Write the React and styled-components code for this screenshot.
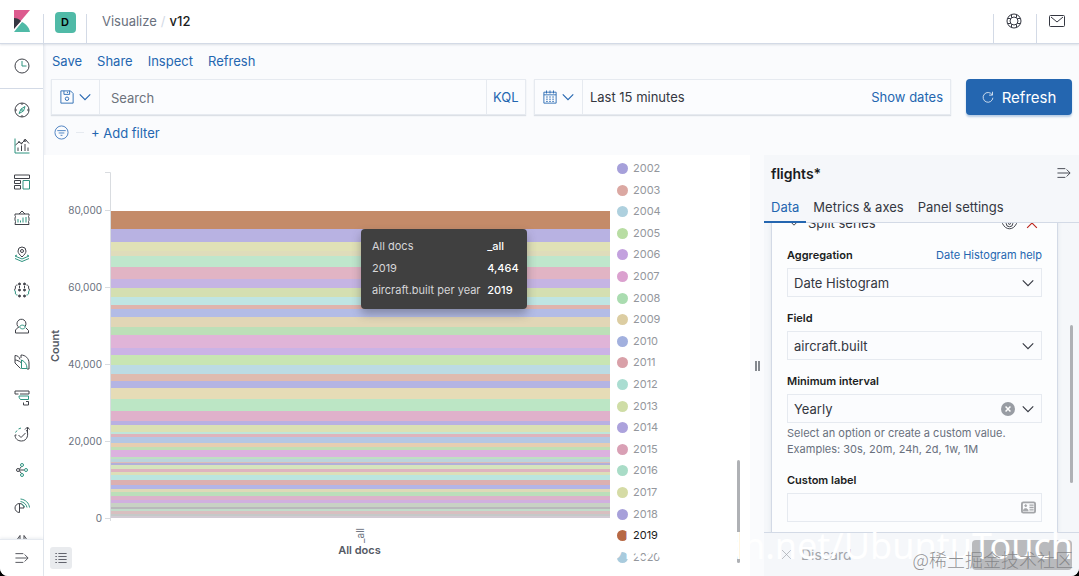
import React from 'react';
import styled, { createGlobalStyle, css, ThemeProvider } from 'styled-components';

const theme = {
    blue: '#2466b0',
    ink: '#1a1c21',
    text: '#343741',
    subdued: '#69707d',
    line: '#d3dae6',
    softLine: '#e6eaf0',
    teal: '#2f9480',
    font: {
        family: 'Inter, "Liberation Sans", sans-serif',
        size: { xs: '11px', s: '12px', m: '13px', l: '15px' },
    },
};

const GlobalStyle = createGlobalStyle`
    * {
        box-sizing: border-box;
    }
    html {
        background: #000000;
    }
    body {
        margin: 0;
        font-family: ${theme.font.family};
        font-size: ${theme.font.size.m};
        color: ${theme.text};
    }
    button, input, select {
        font: inherit;
        color: inherit;
    }
    a {
        text-decoration: none;
    }
`;

const Page = styled.div`
    position: relative;
    display: flex;
    flex-direction: column;
    height: 100vh;
    overflow: hidden;
    border-radius: 0 0 8px 8px;
    background-color: #fafbfd;
`;

const IconSvg = styled.svg`
    display: block;
    flex-shrink: 0;
    fill: none;
    stroke: currentColor;
    stroke-width: 2;
    .accent {
        stroke: ${({ theme: { teal } }) => teal};
    }
`;

const PlainButton = styled.button`
    display: flex;
    align-items: center;
    justify-content: center;
    padding: 0;
    border: 0;
    background: none;
    cursor: pointer;
`;

const Header = styled.header`
    position: relative;
    z-index: 1;
    display: flex;
    align-items: flex-end;
    flex-shrink: 0;
    height: 44px;
    background-color: #ffffff;
    border-bottom: 1px solid ${({ theme: { line } }) => line};
    box-shadow: 0 1px 2px rgba(152, 162, 179, 0.3);
`;
const HeaderCell = styled.div`
    display: flex;
    align-items: flex-start;
    justify-content: center;
    width: ${({ $wide }) => ($wide ? 44 : 43)}px;
    height: 29px;
    ${({ $side, theme: { line } }) =>
        $side === 'left'
            ? css`
                  padding-right: 2px;
                  border-left: 1px solid ${line};
              `
            : css`
                  border-right: 1px solid ${line};
              `}
`;
const HeaderItem = styled(PlainButton)`
    height: 22px;
    margin-top: ${({ $lift }) => ($lift ? '-4px' : '-3px')};
`;
const Space = styled.span`
    width: 21px;
    height: 21px;
    border-radius: 4px;
    background-color: #50baa7;
    color: #000000;
    font-size: ${({ theme }) => theme.font.size.xs};
    font-weight: 600;
    line-height: 21px;
    text-align: center;
`;
const Breadcrumbs = styled.nav`
    display: flex;
    flex: 1;
    gap: 4px;
    height: 29px;
    padding-left: 15px;
    line-height: 14px;
    a {
        color: ${({ theme: { subdued } }) => subdued};
    }
    i {
        color: ${({ theme: { line } }) => line};
        font-style: normal;
    }
    strong {
        font-weight: 500;
        color: ${({ theme: { ink } }) => ink};
    }
`;

const Body = styled.div`
    display: flex;
    flex: 1;
    min-height: 0;
`;
const Sidebar = styled.nav`
    display: flex;
    flex-direction: column;
    flex-shrink: 0;
    width: 44px;
    background-color: #ffffff;
    border-right: 1px solid ${({ theme: { softLine } }) => softLine};
    box-shadow: 1px 0 2px rgba(152, 162, 179, 0.15);
`;
const SideLink = styled.a`
    display: flex;
    align-items: center;
    justify-content: center;
    flex-shrink: 0;
    width: 100%;
    height: ${({ $height }) => $height || 36}px;
    color: #404249;
`;
const SideTop = styled.div`
    border-bottom: 1px solid ${({ theme: { line } }) => line};
`;
const SideList = styled.div`
    flex: 1;
    min-height: 0;
    padding-top: 3px;
    overflow: hidden;
`;
const SideBottom = styled.div`
    border-top: 1px solid ${({ theme: { softLine } }) => softLine};
    box-shadow: 0 -1px 3px rgba(152, 162, 179, 0.2);
`;

const Main = styled.main`
    display: flex;
    flex-direction: column;
    flex: 1;
    min-width: 0;
`;
const TopMenu = styled.div`
    display: flex;
    gap: 15px;
    padding: 8px 8px 9px;
    line-height: 18px;
`;
const BlueLink = styled.a`
    color: ${({ theme: { blue } }) => blue};
    font-size: ${({ $small, theme }) => ($small ? theme.font.size.xs : theme.font.size.m)};
    white-space: nowrap;
`;
const QueryRow = styled.div`
    display: flex;
    gap: 8px;
    padding: 0 7px;
`;
const FieldGroup = styled.div`
    display: flex;
    flex: ${({ $grow }) => $grow} 1 0;
    height: 36px;
    border: 1px solid ${({ theme: { softLine } }) => softLine};
    background-color: #fbfcfe;
    box-shadow: 0 1px 1px rgba(152, 162, 179, 0.3);
`;
const GroupButton = styled(PlainButton)`
    gap: 5px;
    width: 48px;
    color: ${({ theme: { blue } }) => blue};
    ${({ $end, theme: { softLine } }) =>
        $end
            ? css`
                  width: 39px;
                  border-left: 1px solid ${softLine};
              `
            : css`
                  border-right: 1px solid ${softLine};
              `}
`;
const SearchInput = styled.input`
    flex: 1;
    min-width: 0;
    padding: 1px 11px 0;
    border: 0;
    background: none;
    &::placeholder {
        color: #6d727c;
        opacity: 1;
    }
`;
const DateText = styled(PlainButton)`
    flex: 1;
    justify-content: flex-start;
    padding-left: 7px;
`;
const ShowDates = styled(PlainButton)`
    padding-right: 7px;
    color: ${({ theme: { blue } }) => blue};
`;
const RefreshButton = styled(PlainButton)`
    gap: 8px;
    width: 106px;
    height: 36px;
    margin-left: 7px;
    border-radius: 4px;
    background-color: #2466b0;
    box-shadow: 0 2px 2px rgba(36, 102, 176, 0.3);
    color: #ffffff;
    font-size: ${({ theme }) => theme.font.size.l};
`;
const FilterRow = styled.div`
    display: flex;
    align-items: center;
    gap: 7px;
    height: 40px;
    padding: 0 10px 5px;
    color: #4a7fc0;
`;
const Dash = styled.span`
    width: 8px;
    height: 1px;
    background-color: ${({ theme: { softLine } }) => softLine};
`;

const Editor = styled.div`
    display: flex;
    flex: 1;
    min-height: 0;
`;
const Visualization = styled.section`
    position: relative;
    display: flex;
    flex: 1;
    min-width: 0;
    background-color: #ffffff;
`;
const Chart = styled.div`
    flex: 1;
    min-width: 0;
    padding: 10px 0 0 5px;
    color: ${({ theme: { subdued } }) => subdued};
    font-size: ${({ theme }) => theme.font.size.xs};
`;
const PlotRow = styled.div`
    display: flex;
    height: 358px;
`;
const YTitle = styled.div`
    width: 12px;
    padding-bottom: 4px;
    line-height: 12px;
    writing-mode: vertical-rl;
    transform: rotate(180deg);
    text-align: center;
    font-weight: 600;
    color: #555a64;
`;
const AxisSvg = styled.svg`
    width: 49px;
    height: 100%;
    margin-left: 1px;
    fill: #69707d;
    font-size: 10px;
    path {
        fill: none;
        stroke: #d9dce0;
    }
`;
const BarSvg = styled.svg`
    flex: 1;
    min-width: 0;
    height: 354px;
`;
const XAxis = styled.div`
    display: flex;
    flex-direction: column;
    align-items: center;
    padding-left: 60px;
`;
const XTick = styled.span`
    height: 20px;
    font-size: 10px;
    line-height: 12px;
    writing-mode: vertical-rl;
    transform: rotate(180deg);
`;
const XTitle = styled.strong`
    line-height: 14px;
    font-weight: 600;
    color: #555a64;
`;
const Legend = styled.ul`
    display: flex;
    flex-direction: column;
    width: 140px;
    margin: 0;
    padding: 2px 0 0 7px;
    overflow: hidden;
    list-style: none;
`;
const LegendItem = styled.li`
    display: flex;
    align-items: center;
    flex-shrink: 0;
    gap: 5px;
    height: 22px;
    margin-bottom: ${({ $tight }) => ($tight ? '-1px' : 0)};
    font-size: ${({ theme }) => theme.font.size.xs};
    color: ${({ $active }) => ($active ? '#1a1c21' : '#94979d')};
    &::before {
        content: '';
        width: 11px;
        height: 11px;
        border-radius: 50%;
        background-color: ${({ $color }) => $color};
    }
`;
const ScrollThumb = styled.span`
    position: absolute;
    top: ${({ $top }) => $top}px;
    right: ${({ $right }) => $right}px;
    width: 3px;
    height: ${({ $height }) => $height}px;
    border-radius: 2px;
    background-color: #afb1b5;
`;
const LegendToggle = styled(PlainButton)`
    position: absolute;
    bottom: 7px;
    left: 6px;
    width: 22px;
    height: 22px;
    border-radius: 3px;
    background-color: #e9ebee;
`;
const Tooltip = styled.table`
    position: absolute;
    top: 74px;
    left: 317px;
    width: 166px;
    height: 80px;
    padding: 6px 8px 8px 9px;
    border-radius: 4px;
    border-spacing: 0;
    background-color: #404040;
    box-shadow: 0 5px 10px rgba(60, 60, 70, 0.4);
    color: #d6d6d8;
    font-size: ${({ theme }) => theme.font.size.xs};
    white-space: nowrap;
    th,
    td {
        padding: 0 0 0 2px;
        text-align: left;
        font-weight: 400;
    }
    td {
        padding-left: 6px;
        color: #ffffff;
        font-weight: 500;
    }
`;
const Resizer = styled.div`
    display: flex;
    align-items: center;
    justify-content: center;
    gap: 1px;
    width: 14px;
    &::before,
    &::after {
        content: '';
        width: 2px;
        height: 10px;
        background-color: #85898f;
    }
`;

const Panel = styled.aside`
    position: relative;
    display: flex;
    flex-direction: column;
    width: 315px;
    background-color: #f5f7fa;
`;
const PanelHeader = styled.div`
    display: flex;
    align-items: center;
    justify-content: space-between;
    height: 36px;
    padding: 0 8px 0 7px;
    h2 {
        margin: 0;
        font-size: 14px;
        font-weight: 600;
        color: ${({ theme: { ink } }) => ink};
    }
`;
const Tabs = styled.div`
    display: flex;
    flex-shrink: 0;
    height: 32px;
    border-bottom: 1px solid ${({ theme: { line } }) => line};
`;
const Tab = styled(PlainButton)`
    height: 32px;
    padding: 0 7px;
    white-space: nowrap;
    ${({ $active, theme: { blue } }) =>
        $active &&
        css`
            color: ${blue};
            box-shadow: inset 0 -2px 0 ${blue};
        `}
`;
const PanelBody = styled.div`
    flex: 1;
    min-height: 0;
    padding: 0 21px 0 7px;
    overflow: hidden;
`;
const Card = styled.div`
    display: flex;
    flex-direction: column;
    gap: 13px;
    margin-top: -20px;
    padding: 8px 15px 20px 15px;
    border: 1px solid ${({ theme: { line } }) => line};
    border-radius: 4px;
    background-color: #fcfdfe;
    box-shadow: 0 1px 4px rgba(152, 162, 179, 0.2);
`;
const CardTitle = styled.div`
    display: flex;
    align-items: center;
    gap: 9px;
    height: 22px;
    padding: 0 4px 0 2px;
    span {
        flex: 1;
    }
`;
const FormRow = styled.div`
    display: flex;
    flex-direction: column;
    gap: 5px;
`;
const LabelRow = styled.div`
    display: flex;
    justify-content: space-between;
    line-height: 16px;
    label {
        font-size: ${({ theme }) => theme.font.size.xs};
        font-weight: 600;
        color: ${({ theme: { ink } }) => ink};
    }
`;
const Control = styled.div`
    display: flex;
    align-items: center;
    height: 29px;
    padding-right: ${({ $tight }) => ($tight ? '5px' : '7px')};
    border: 1px solid ${({ theme: { softLine } }) => softLine};
    background-color: #fbfcfe;
    gap: 7px;
    select,
    input {
        flex: 1;
        min-width: 0;
        height: 27px;
        padding: 0 0 0 6px;
        border: 0;
        appearance: none;
        background: none;
    }
`;
const Clear = styled(PlainButton)`
    width: 14px;
    height: 14px;
    border-radius: 50%;
    background-color: #989ca3;
    color: #ffffff;
`;
const Help = styled.p`
    margin: -3px 0 2px;
    font-size: ${({ theme }) => theme.font.size.xs};
    line-height: 16px;
    color: ${({ theme: { subdued } }) => subdued};
`;
const PanelFooter = styled.div`
    display: flex;
    align-items: center;
    justify-content: space-between;
    flex-shrink: 0;
    height: 44px;
    padding: 0 7px 0 17px;
    border-top: 1px solid ${({ theme: { line } }) => line};
`;
const Discard = styled(PlainButton)`
    gap: 9px;
    color: #a2a5ab;
    font-size: 14px;
`;
const Update = styled(PlainButton)`
    width: 100px;
    height: 30px;
    border-radius: 4px;
    background-color: #b9babd;
`;

const Watermark = styled.div`
    position: absolute;
    right: 6px;
    bottom: 5px;
    z-index: 3;
    color: rgba(125, 125, 128, 0.85);
    font: 300 18px/24px 'Noto Sans CJK SC', sans-serif;
    pointer-events: none;
    white-space: nowrap;
`;
const SiteMark = styled(Watermark)`
    bottom: 8px;
    z-index: 2;
    color: #ffffff;
    font: 36px/44px 'Noto Sans', sans-serif;
`;

const Icon = ({ size = 16, box = 32, children, ...rest }) => (
    <IconSvg width={size} height={size} viewBox={`0 0 ${box} ${box}`} aria-hidden="true" {...rest}>
        {children}
    </IconSvg>
);

const Chevron = () => (
    <Icon size={12}>
        <path d="M2 9l14 14L30 9" strokeWidth="3" />
    </Icon>
);

const MenuArrow = () => (
    <Icon size={14}>
        <path d="M1 6h18M1 16h28M1 26h18M22 8l8 8-8 8" />
    </Icon>
);

const apps = [
    {
        name: 'Discover',
        icon: (
            <>
                <circle cx="16" cy="16" r="14" />
                <path d="M16 2v4M16 26v4M2 16h4M26 16h4" />
                <path className="accent" d="M22 9l-3 9-9 5 4-9z" />
                <circle className="accent" cx="16" cy="16" r="1" />
            </>
        ),
    },
    {
        name: 'Visualize',
        icon: (
            <>
                <path className="accent" d="M2 1v29h29" />
                <path d="M3 14l7-6 5 3 8-8 7 8M8 19v7M15 15v11M22 12v14M28 19v7" />
                <circle cx="10" cy="8" r="1" />
                <circle cx="15" cy="11" r="1" />
                <circle cx="22" cy="5" r="2" />
            </>
        ),
    },
    {
        name: 'Dashboard',
        icon: (
            <>
                <path d="M1 2h30v7H1zM1 13h12v6H1zM1 23h12v7H1z" />
                <path className="accent" d="M18 13h13v17H18z" />
            </>
        ),
    },
    {
        name: 'Canvas',
        icon: (
            <>
                <path d="M2 8h28v3l-1 2 1 3v5l-1 2 1 6H2l1-6-1-3v-4l1-3-1-2zM10 8l6-6 6 6" />
                <path className="accent" d="M8 18v7M13 21v4M18 15v10M24 14v11" />
            </>
        ),
    },
    {
        name: 'Maps',
        icon: (
            <>
                <path d="M16 22c-5-5-8-8-8-12a8 8 0 0116 0c0 4-3 7-8 12z" />
                <circle cx="16" cy="10" r="3" />
                <path className="accent" d="M6 18l-4 2 14 6 14-6-4-2M2 25l14 6 14-6" />
            </>
        ),
    },
    {
        name: 'Machine Learning',
        icon: (
            <>
                <g fill="currentColor">
                    <circle cx="11" cy="4" r="2" />
                    <circle cx="21" cy="4" r="2" />
                    <circle cx="11" cy="16" r="2" />
                    <circle cx="21" cy="16" r="2" />
                    <circle cx="11" cy="28" r="2" />
                    <circle cx="21" cy="28" r="2" />
                </g>
                <path d="M7 6c-4 0-5 3-4 6l-2 4M25 6c4 0 5 3 4 6l2 4M11 8v4M21 8v4" />
                <path className="accent" d="M1 16l2 4c-1 3 0 6 4 6M31 16l-2 4c1 3 0 6-4 6" />
            </>
        ),
    },
    {
        name: 'Metrics',
        icon: (
            <>
                <path d="M10 19a9 9 0 1112-2M9 18l-6 6v6h26v-5l-5-5" />
                <path className="accent" d="M11 18c2-5 9-5 12 0-3 5-9 5-12 0z" />
            </>
        ),
    },
    {
        name: 'Logs',
        icon: (
            <>
                <path d="M2 12V3c5 0 9 3 10 8M14 8V2c9 0 16 7 16 16v12h-4" />
                <path className="accent" d="M15 12v17h11c0-8-4-14-11-17z" />
                <path d="M2 12c4 0 8 2 12 5M2 12v6l11 11" />
            </>
        ),
    },
    {
        name: 'APM',
        icon: (
            <>
                <path d="M9 8H2V2h28v6H12M19 25v5h10v-7h-5" />
                <path className="accent" d="M10 12h19v7H14c-3 0-4-4-4-7z" />
            </>
        ),
    },
    {
        name: 'Uptime',
        icon: (
            <>
                <path d="M25 8c5 8 2 22-10 22C7 30 2 25 2 18h3M27 15V3M22 7l5-5 4 5M9 18l5 5 9-9" />
                <path className="accent" d="M3 13l3-4M9 6l5-2" />
            </>
        ),
    },
    {
        name: 'SIEM',
        icon: (
            <>
                <circle cx="8" cy="16" r="3" />
                <path d="M11 16h9M11 14l4-5M11 18l4 5" />
                <circle className="accent" cx="16" cy="6" r="3" />
                <circle className="accent" cx="24" cy="16" r="3" />
                <circle className="accent" cx="16" cy="26" r="3" />
            </>
        ),
    },
    {
        name: 'Dev Tools',
        icon: (
            <>
                <path d="M11 20h9a9 9 0 10-9 9zM11 11v9" />
                <path className="accent" d="M13 2c10 1 17 8 18 17M13 7c7 1 12 6 13 12M15 12c3 1 5 3 6 6" />
            </>
        ),
    },
    {
        name: 'Stack Monitoring',
        icon: <path d="M12 3L3 16l9 13M20 3l9 13-9 13M12 3v20M20 3v20" />,
    },
];

// [height, colour] from the top of the stack to the bottom
const bands = [
    [18, '#c48b69'],
    [13, '#b8b2e2'],
    [9, '#e0e1b6'],
    [5, '#dfdcbb'],
    [11, '#bfe6cc'],
    [12, '#e1b4c4'],
    [9, '#c5b4e3'],
    [9, '#d4dfb1'],
    [8, '#bfe5e3'],
    [4, '#dfb4ad'],
    [8, '#b3bce6'],
    [10, '#e1d6b6'],
    [8, '#bcdfb8'],
    [13, '#e0b4d8'],
    [7, '#cbb3e6'],
    [10, '#c8e5b3'],
    [9, '#bcdbe4'],
    [7, '#dfbbb0'],
    [7, '#b4b4e3'],
    [11, '#e6dcb6'],
    [12, '#bce6c5'],
    [10, '#e0b1cb'],
    [4, '#b9b0e2'],
    [7, '#dbe0b4'],
    [2, '#bfe5da'],
    [3, '#deb3bc'],
    [6, '#b4c7e4'],
    [4, '#e7ceb1'],
    [3, '#c0dfb6'],
    [7, '#dcb1df'],
    [2, '#bfdfc2'],
    [3, '#bcd3dc'],
    [1, '#dcbdb8'],
    [2, '#b3afd9'],
    [4, '#d6e4bd'],
    [3, '#dfb3bf'],
    [3, '#dddfb8'],
    [5, '#bbe5df'],
    [5, '#dcb0b0'],
    [4, '#b3b5e7'],
    [3, '#dfdab7'],
    [4, '#bbdfba'],
    [4, '#dcb3cb'],
    [3, '#d0b0df'],
    [4, '#c8d2c4'],
    [2, '#b9b9bb'],
    [2, '#c2dcca'],
    [3, '#d8bfc0'],
    [2, '#c5c9c8'],
    [2, '#d2cbd4'],
];

const stack = bands.reduce((rects, [height, color]) => {
    const last = rects[rects.length - 1];
    return [...rects, { y: last ? last.y + last.height : 46, height, color }];
}, []);

const years = [
    ['2002', '#a6a0da'],
    ['2003', '#dba8a2'],
    ['2004', '#aed0de'],
    ['2005', '#b8dda3'],
    ['2006', '#c3a1de'],
    ['2007', '#dba1cf'],
    ['2008', '#aadcb0'],
    ['2009', '#dccda2'],
    ['2010', '#a2b0de'],
    ['2011', '#d9a0a8'],
    ['2012', '#aaddd1'],
    ['2013', '#cfdda6'],
    ['2014', '#aca2dc'],
    ['2015', '#d9a0b5'],
    ['2016', '#a9dcc7'],
    ['2017', '#d5dba5'],
    ['2018', '#a7a0da'],
    ['2019', '#b76844'],
    ['2020', '#a9cbdd'],
];

const ticks = ['80,000', '60,000', '40,000', '20,000', '0'];

const Field = ({ id, label, link, children }) => (
    <FormRow>
        <LabelRow>
            <label htmlFor={id}>{label}</label>
            {!!link && (
                <BlueLink href="#help" $small>
                    {link}
                </BlueLink>
            )}
        </LabelRow>
        {children}
    </FormRow>
);

const TopHeader = () => (
    <Header>
        <HeaderCell $side="right" $wide>
            <HeaderItem aria-label="Home" $lift>
                <svg width="16" height="22" viewBox="0 0 16 22">
                    <path fill="#dd5b8f" d="M0 0h16L0 19z" />
                    <path fill="#343741" d="M0 8c3 0 5 1 7 3L0 19z" />
                    <path fill="#50baa7" d="M8 12c4 2 7 5 8 10H0z" />
                    <path stroke="#ffffff" d="M0 20L8 11" />
                </svg>
            </HeaderItem>
        </HeaderCell>
        <HeaderCell $side="right">
            <HeaderItem aria-label="Default space">
                <Space>D</Space>
            </HeaderItem>
        </HeaderCell>
        <Breadcrumbs>
            <a href="#visualize">Visualize</a>
            <i>/</i>
            <strong>v12</strong>
        </Breadcrumbs>
        <HeaderCell $side="left">
            <HeaderItem aria-label="Help" $lift>
                <Icon>
                    <circle cx="16" cy="16" r="14" />
                    <circle cx="16" cy="16" r="8" />
                    <path d="M11 3v6M21 3v6M11 23v6M21 23v6M3 11h6M3 21h6M23 11h6M23 21h6" />
                </Icon>
            </HeaderItem>
        </HeaderCell>
        <HeaderCell $side="left">
            <HeaderItem aria-label="Newsfeed" $lift>
                <Icon>
                    <rect x="1" y="5" width="30" height="22" rx="2" />
                    <path d="M4 8l12 10L28 8" />
                </Icon>
            </HeaderItem>
        </HeaderCell>
    </Header>
);

const SideNav = () => (
    <Sidebar>
        <SideTop>
            <SideLink href="#recent" aria-label="Recently viewed" $height={44}>
                <Icon>
                    <circle cx="16" cy="16" r="14" />
                    <path className="accent" d="M16 6v10h9" />
                </Icon>
            </SideLink>
        </SideTop>
        <SideList>
            {apps.map(({ name, icon }) => (
                <SideLink key={name} href="#app" aria-label={name}>
                    <Icon>{icon}</Icon>
                </SideLink>
            ))}
        </SideList>
        <SideBottom>
            <SideLink as={PlainButton} aria-label="Expand">
                <MenuArrow />
            </SideLink>
        </SideBottom>
    </Sidebar>
);

const QueryBar = () => (
    <QueryRow>
        <FieldGroup $grow={475}>
            <GroupButton aria-label="Saved queries">
                <Icon size={14}>
                    <path d="M2 2h22l6 6v22H2zM9 2v8h13V2M17 4v3" />
                    <circle cx="16" cy="20" r="4" />
                </Icon>
                <Chevron />
            </GroupButton>
            <SearchInput aria-label="Search" placeholder="Search" />
            <GroupButton $end>KQL</GroupButton>
        </FieldGroup>
        <FieldGroup $grow={417}>
            <GroupButton aria-label="Quick select">
                <Icon size={14}>
                    <path d="M2 5h28v25H2zM2 11h28M8 1v7M16 1v7M24 1v7" />
                    <path strokeDasharray="4 3" d="M7 16h18M7 21h18M7 26h18" />
                </Icon>
                <Chevron />
            </GroupButton>
            <DateText>Last 15 minutes</DateText>
            <ShowDates>Show dates</ShowDates>
        </FieldGroup>
        <RefreshButton>
            <Icon size={12}>
                <path d="M28 2v9h-9M27 10A13 13 0 1029 18" />
            </Icon>
            Refresh
        </RefreshButton>
    </QueryRow>
);

const StackedChart = () => (
    <Chart>
        <PlotRow>
            <YTitle>Count</YTitle>
            <AxisSvg>
                <path d="M43 7.5h5.5V356M43 45.5h5M43 122.5h5M43 199.5h5M43 276.5h5M43 353.5h5" />
                {ticks.map((tick, i) => (
                    <text key={tick} x="40" y={49 + i * 77} textAnchor="end">
                        {tick}
                    </text>
                ))}
            </AxisSvg>
            <BarSvg viewBox="0 0 500 354" preserveAspectRatio="none" shapeRendering="crispEdges">
                {stack.map(({ y, height, color }) => (
                    <rect key={y} y={y} width="500" height={height} fill={color} />
                ))}
            </BarSvg>
        </PlotRow>
        <XAxis>
            <XTick>_all</XTick>
            <XTitle>All docs</XTitle>
        </XAxis>
    </Chart>
);

const SidePanel = () => (
    <Panel>
        <PanelHeader>
            <h2>flights*</h2>
            <PlainButton aria-label="Toggle sidebar">
                <MenuArrow />
            </PlainButton>
        </PanelHeader>
        <Tabs role="tablist">
            <Tab role="tab" $active>
                Data
            </Tab>
            <Tab role="tab">Metrics &amp; axes</Tab>
            <Tab role="tab">Panel settings</Tab>
        </Tabs>
        <PanelBody>
            <Card>
                <CardTitle>
                    <Icon size={10}>
                        <path d="M2 9l14 14L30 9" strokeWidth="3" />
                    </Icon>
                    <span>Split series</span>
                    <PlainButton aria-label="Disable aggregation">
                        <Icon size={15}>
                            <path d="M1 16C8 1 24 1 31 16 24 31 8 31 1 16z" />
                            <circle cx="16" cy="16" r="7" />
                            <circle cx="16" cy="16" r="2" />
                        </Icon>
                    </PlainButton>
                    <PlainButton aria-label="Remove">
                        <Icon size={12} color="#bd271e">
                            <path d="M3 3l26 26M29 3L3 29" strokeWidth="3" />
                        </Icon>
                    </PlainButton>
                </CardTitle>
                <Field id="aggregation" label="Aggregation" link="Date Histogram help">
                    <Control>
                        <select id="aggregation">
                            <option>Date Histogram</option>
                        </select>
                        <Chevron />
                    </Control>
                </Field>
                <Field id="field" label="Field">
                    <Control>
                        <select id="field">
                            <option>aircraft.built</option>
                        </select>
                        <Chevron />
                    </Control>
                </Field>
                <Field id="interval" label="Minimum interval">
                    <Control>
                        <input id="interval" defaultValue="Yearly" />
                        <Clear aria-label="Clear interval">
                            <Icon size={6}>
                                <path d="M3 3l26 26M29 3L3 29" strokeWidth="8" />
                            </Icon>
                        </Clear>
                        <Chevron />
                    </Control>
                    <Help>
                        Select an option or create a custom value.
                        <br />
                        Examples: 30s, 20m, 24h, 2d, 1w, 1M
                    </Help>
                </Field>
                <Field id="label" label="Custom label">
                    <Control $tight>
                        <input id="label" />
                        <Icon size={15} color="#a3a5a9">
                            <rect x="2" y="5" width="28" height="22" rx="3" strokeWidth="4" />
                            <path d="M18 11h9M18 16h9M18 21h9" strokeWidth="3" />
                            <path d="M5 23c0-6 10-6 10 0z" fill="currentColor" />
                            <circle cx="10" cy="12" r="2" fill="currentColor" />
                        </Icon>
                    </Control>
                </Field>
            </Card>
        </PanelBody>
        <PanelFooter>
            <Discard>
                <Icon size={11}>
                    <path d="M3 3l26 26M29 3L3 29" />
                </Icon>
                Discard
            </Discard>
            <Update aria-label="Update" disabled />
        </PanelFooter>
        <ScrollThumb $top={170} $right={6} $height={158} />
    </Panel>
);

const App = () => (
    <ThemeProvider theme={theme}>
        <GlobalStyle />
        <Page>
            <TopHeader />
            <Body>
                <SideNav />
                <Main>
                    <TopMenu>
                        <BlueLink href="#save">Save</BlueLink>
                        <BlueLink href="#share">Share</BlueLink>
                        <BlueLink href="#inspect">Inspect</BlueLink>
                        <BlueLink href="#refresh">Refresh</BlueLink>
                    </TopMenu>
                    <QueryBar />
                    <FilterRow>
                        <Icon size={15}>
                            <circle cx="16" cy="16" r="14" />
                            <path d="M7 12h18M10 17h12M14 22h4" />
                        </Icon>
                        <Dash />
                        <BlueLink href="#filter">+ Add filter</BlueLink>
                    </FilterRow>
                    <Editor>
                        <Visualization>
                            <StackedChart />
                            <Legend>
                                {years.map(([year, color], i) => (
                                    <LegendItem
                                        key={year}
                                        $color={color}
                                        $active={year === '2019'}
                                        $tight={i % 5 === 1 || i % 5 === 3}
                                    >
                                        {year}
                                    </LegendItem>
                                ))}
                            </Legend>
                            <ScrollThumb $top={305} $right={10} $height={103} />
                            <LegendToggle aria-label="Toggle legend">
                                <Icon size={12}>
                                    <path d="M1 4h4M9 4h22M1 12h4M9 12h22M1 20h4M9 20h22M1 28h4M9 28h22" />
                                </Icon>
                            </LegendToggle>
                            <Tooltip>
                                <tbody>
                                    <tr>
                                        <th scope="row">All docs</th>
                                        <td>_all</td>
                                    </tr>
                                    <tr>
                                        <th scope="row">2019</th>
                                        <td>4,464</td>
                                    </tr>
                                    <tr>
                                        <th scope="row">aircraft.built per year</th>
                                        <td>2019</td>
                                    </tr>
                                </tbody>
                            </Tooltip>
                        </Visualization>
                        <Resizer />
                        <SidePanel />
                    </Editor>
                </Main>
            </Body>
            <SiteMark>blog.csdn.net/UbuntuTouch</SiteMark>
            <Watermark>@稀土掘金技术社区</Watermark>
        </Page>
    </ThemeProvider>
);

export default App;
